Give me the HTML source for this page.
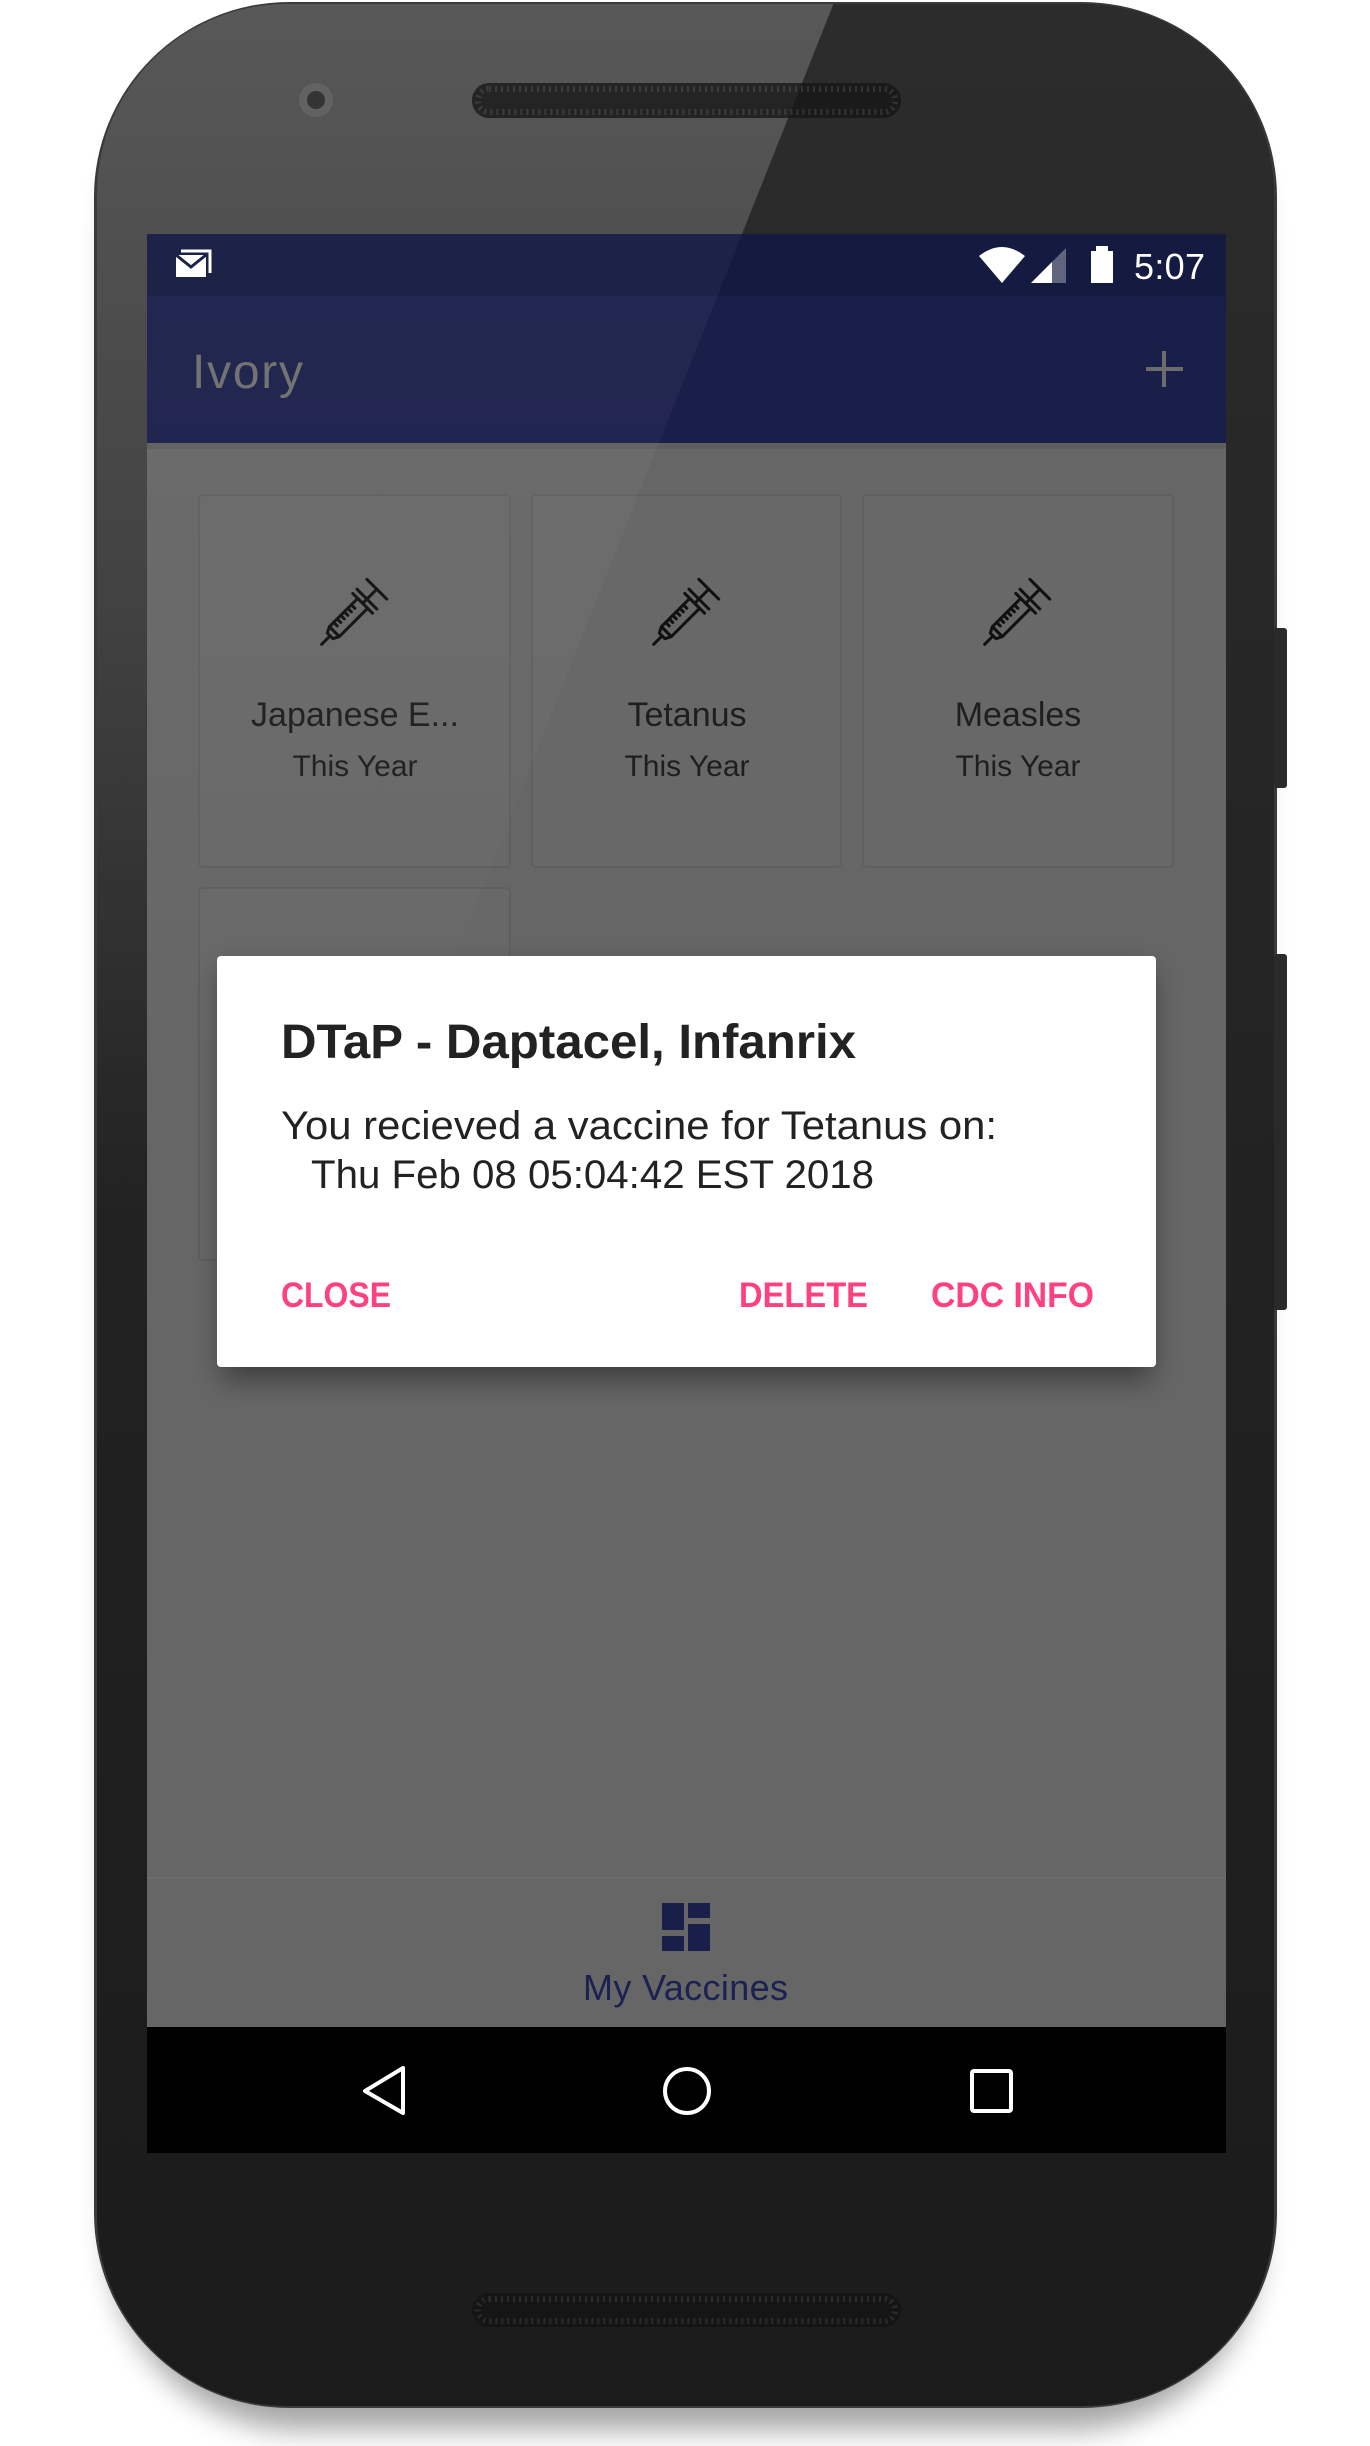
<!DOCTYPE html>
<html><head><meta charset="utf-8"><style>html,body{margin:0;padding:0;background:#fff}svg{display:block}text{font-family:"Liberation Sans",sans-serif}</style></head>
<body>
<svg width="1370" height="2446" viewBox="0 0 1370 2446" xmlns="http://www.w3.org/2000/svg">
<defs>
<linearGradient id="body" x1="0" y1="0" x2="0" y2="1">
<stop offset="0" stop-color="#2c2c2c"/><stop offset="0.5" stop-color="#222"/><stop offset="1" stop-color="#1b1b1b"/>
</linearGradient>
<linearGradient id="gl" x1="0" y1="0" x2="0" y2="1" gradientUnits="userSpaceOnUse" x2u="0">
<stop offset="0" stop-color="#fff" stop-opacity="0.16"/><stop offset="0.25" stop-color="#fff" stop-opacity="0.1"/><stop offset="0.45" stop-color="#fff" stop-opacity="0"/>
</linearGradient>
<linearGradient id="gl2" x1="0" y1="0" x2="0" y2="2446" gradientUnits="userSpaceOnUse">
<stop offset="0" stop-color="#fff" stop-opacity="0.05"/><stop offset="0.3" stop-color="#fff" stop-opacity="0.02"/><stop offset="0.45" stop-color="#fff" stop-opacity="0"/>
</linearGradient>
<linearGradient id="gl1" x1="0" y1="0" x2="0" y2="2446" gradientUnits="userSpaceOnUse">
<stop offset="0" stop-color="#fff" stop-opacity="0.17"/><stop offset="0.25" stop-color="#fff" stop-opacity="0.1"/><stop offset="0.5" stop-color="#fff" stop-opacity="0"/>
</linearGradient>
<clipPath id="ph"><rect x="97" y="4" width="1177" height="2402" rx="190"/></clipPath>
<filter id="sh" x="-10%" y="-10%" width="120%" height="130%"><feGaussianBlur stdDeviation="14"/></filter>
<g id="syr" fill="none" stroke="#111" stroke-width="3" stroke-linecap="round" stroke-linejoin="round">
<g transform="rotate(-45)">
<line x1="-50" y1="0" x2="-38" y2="0"/>
<path d="M-38 -4 L-32 -7 L-32 7 L-38 4 Z"/>
<rect x="-32" y="-7" width="40" height="14"/>
<path d="M-26 -7 v5 M-21 -7 v5 M-16 -7 v5 M-11 -7 v5 M-6 -7 v5 M-1 -7 v5"/>
<line x1="8" y1="-14" x2="8" y2="14"/>
<line x1="14" y1="-14" x2="14" y2="14"/>
<line x1="8" y1="0" x2="28" y2="0"/>
<line x1="28" y1="-14" x2="28" y2="14"/>
</g>
</g>
</defs>
<rect x="110" y="40" width="1150" height="2390" rx="190" fill="#000" opacity="0.35" filter="url(#sh)"/>
<rect x="94" y="2" width="1183" height="2406" rx="195" fill="#3a3a3a"/>
<rect x="97" y="4" width="1177" height="2402" rx="190" fill="url(#body)"/>
<g clip-path="url(#ph)"><polygon points="97,0 835,0 0,2100 0,0" fill="url(#gl1)"/></g>
<rect x="1274" y="628" width="13" height="160" rx="3" fill="#2a2a2a"/>
<rect x="1274" y="954" width="13" height="356" rx="3" fill="#2a2a2a"/>
<rect x="472" y="83" width="429" height="35" rx="17" fill="#1a1a1a"/>
<rect x="478" y="89" width="417" height="23" rx="11" fill="none" stroke="#333" stroke-width="6" stroke-dasharray="2 4"/>
<circle cx="316" cy="100" r="17" fill="#5a5a5a"/><circle cx="316" cy="100" r="9" fill="#2a2a2a"/>
<rect x="472" y="2293" width="429" height="34" rx="17" fill="#151515"/>
<rect x="478" y="2299" width="417" height="22" rx="11" fill="none" stroke="#2b2b2b" stroke-width="6" stroke-dasharray="2 4"/>
<rect x="147" y="234" width="1079" height="1918" fill="#666"/>
<rect x="147" y="234" width="1079" height="62" fill="#141a40"/>
<rect x="147" y="296" width="1079" height="147" fill="#1a1f4a"/>
<rect x="147" y="443" width="1079" height="6" fill="#555" opacity="0.5"/>
<rect x="176" y="255" width="30" height="22" fill="#fff"/><path d="M176 255 L191 267 L206 255" stroke="#141a40" stroke-width="3" fill="none"/><path d="M181 251 h29 v22" stroke="#fff" stroke-width="3" fill="none"/>
<path d="M979 256 Q1002 238 1025 256 L1002 283 Z" fill="#fff"/>
<polygon points="1031,283 1066,248 1066,283" fill="#60647f"/><polygon points="1031,283 1052,262 1052,283" fill="#fff"/>
<rect x="1096" y="246" width="12" height="5" fill="#fff"/><rect x="1091" y="251" width="22" height="32" fill="#fff"/>
<text x="1134" y="279" font-size="36" fill="#fff" textLength="71">5:07</text>
<text x="192" y="388" font-size="48" fill="#6e6e6e" textLength="111">Ivory</text>
<path d="M1164 351 v36 M1146 369 h37" stroke="#6b6b6b" stroke-width="4"/>
<g fill="#686868" stroke="#5f5f5f" stroke-width="2">
<rect x="199" y="495" width="311" height="372" rx="4"/>
<rect x="532" y="495" width="309" height="372" rx="4"/>
<rect x="863" y="495" width="310" height="372" rx="4"/>
<rect x="199" y="888" width="311" height="372" rx="4"/>
</g>
<use href="#syr" x="357" y="609"/><use href="#syr" x="689" y="609"/><use href="#syr" x="1020" y="609"/>
<g fill="#1e1e1e" text-anchor="middle">
<text x="355" y="726" font-size="34">Japanese E...</text>
<text x="355" y="776" font-size="30">This Year</text>
<text x="687" y="726" font-size="34">Tetanus</text>
<text x="687" y="776" font-size="30">This Year</text>
<text x="1018" y="726" font-size="34">Measles</text>
<text x="1018" y="776" font-size="30">This Year</text>
</g>
<g clip-path="url(#ph)"><polygon points="835,0 0,2100 0,0" fill="url(#gl2)"/></g>
<rect x="222" y="970" width="930" height="410" fill="#000" opacity="0.4" filter="url(#sh)"/>
<rect x="217" y="956" width="939" height="411" rx="4" fill="#fff"/>
<text x="281" y="1058" font-size="48" font-weight="bold" fill="#222" textLength="575" lengthAdjust="spacingAndGlyphs">DTaP - Daptacel, Infanrix</text>
<text x="281" y="1139" font-size="40" fill="#222" textLength="716" lengthAdjust="spacingAndGlyphs">You recieved a vaccine for Tetanus on:</text>
<text x="311" y="1188" font-size="40" fill="#222" textLength="563" lengthAdjust="spacingAndGlyphs">Thu Feb 08 05:04:42 EST 2018</text>
<g font-size="35" font-weight="bold" fill="#ff4081">
<text x="281" y="1307" textLength="110" lengthAdjust="spacingAndGlyphs">CLOSE</text>
<text x="739" y="1307" textLength="129" lengthAdjust="spacingAndGlyphs">DELETE</text>
<text x="931" y="1307" textLength="163" lengthAdjust="spacingAndGlyphs">CDC INFO</text>
</g>
<rect x="147" y="1877" width="1079" height="2" fill="#6c6c6c"/>
<g fill="#1a1f4a">
<rect x="662" y="1903" width="22" height="27"/><rect x="662" y="1936" width="22" height="15"/>
<rect x="688" y="1903" width="22" height="15"/><rect x="688" y="1924" width="22" height="27"/>
</g>
<text x="583" y="2000" font-size="36" fill="#1b2150" textLength="205">My Vaccines</text>
<rect x="147" y="2027" width="1079" height="126" fill="#000"/>
<path d="M403 2068 L365 2091 L403 2113 Z" fill="none" stroke="#fff" stroke-width="4" stroke-linejoin="round"/>
<circle cx="687" cy="2091" r="22" fill="none" stroke="#fff" stroke-width="4"/>
<rect x="972" y="2071" width="39" height="40" rx="2" fill="none" stroke="#fff" stroke-width="4"/>
</svg>
</body></html>
